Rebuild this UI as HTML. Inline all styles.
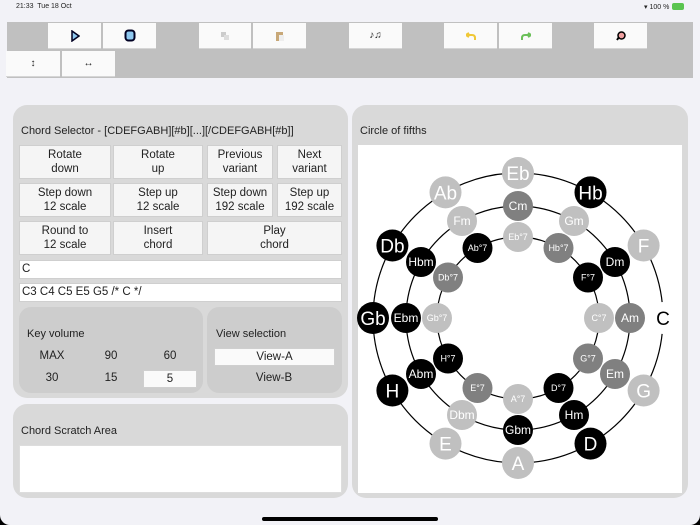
<!DOCTYPE html>
<html><head><meta charset="utf-8">
<style>
*{box-sizing:border-box;margin:0;padding:0}
html,body{width:700px;height:525px;background:#000;overflow:hidden;font-family:"Liberation Sans",sans-serif;color:#222}
#scr{position:absolute;left:0;top:0;width:700px;height:525px;background:#f2f2f7;border-radius:0 0 10px 10px}
.a{position:absolute}
.tb{left:7px;top:22px;width:686px;height:56px;background:#c0c0c0}
.bt{position:absolute;background:#fafafa;border-bottom:1px solid #d6d6d6;display:flex;align-items:center;justify-content:center}
.pn{background:#d9d9d9;border-radius:14px}
.sp{background:#cdcdcd;border-radius:12px}
.t{position:absolute;font-size:11px;color:#222}
.b{position:absolute;background:#f5f5f5;border:1px solid #cfcfcf;font-size:11.5px;line-height:14px;text-align:center;display:flex;align-items:center;justify-content:center;flex-direction:column}
.in{position:absolute;background:#fff;border:1px solid #cfcfcf;font-size:11.5px;padding-left:2px;line-height:17px}
.c{position:absolute;font-size:11.5px;text-align:center;width:40px}
</style></head><body>
<div id="scr">
<div class="a" style="left:16px;top:3px;font-size:7px">21:33&nbsp; Tue 18 Oct</div>
<div class="a" style="left:644px;top:3px;font-size:7px">&#9662; 100 %</div>
<div class="a" style="left:672px;top:3px;width:12px;height:7px;background:#5ac44f;border-radius:2px"></div>
<div class="a tb"></div>
<div class="bt" style="left:48px;top:23px;width:53px;height:26px"><svg width="10" height="12"><path d="M2 1 L9 6 L2 11 Z" fill="#8ec8f0" stroke="#002" stroke-width="1.5"/></svg></div>
<div class="bt" style="left:103px;top:23px;width:53px;height:26px"><svg width="12" height="13"><rect x="1.5" y="1.5" width="9" height="10" rx="3" fill="#8ec8f0" stroke="#002" stroke-width="2"/></svg></div>
<div class="bt" style="left:199px;top:23px;width:52px;height:26px"><svg width="8" height="8"><rect x="0" y="0" width="5" height="5" fill="#ccc"/><rect x="3" y="3" width="5" height="5" fill="#ddd"/></svg></div>
<div class="bt" style="left:253px;top:23px;width:53px;height:26px"><svg width="8" height="10"><rect x="0" y="1" width="7" height="9" fill="#c8a878"/><rect x="3" y="4" width="5" height="6" fill="#eee"/></svg></div>
<div class="bt" style="left:349px;top:23px;width:53px;height:26px;font-size:10px;font-weight:bold">&#9834;&#9835;</div>
<div class="bt" style="left:444px;top:23px;width:53px;height:26px"><svg width="10" height="8"><path d="M3 1 L0 3 L3 5 M0 3 H6 Q9 3 9 6 V8" fill="none" stroke="#f0c838" stroke-width="2"/></svg></div>
<div class="bt" style="left:499px;top:23px;width:53px;height:26px"><svg width="10" height="8"><path d="M7 1 L10 3 L7 5 M10 3 H4 Q1 3 1 6 V8" fill="none" stroke="#6cc05a" stroke-width="2"/></svg></div>
<div class="bt" style="left:594px;top:23px;width:53px;height:26px"><svg width="10" height="10"><circle cx="5.5" cy="4.5" r="3.5" fill="#f0a0a0" stroke="#000" stroke-width="1.5"/><path d="M1 9 L3 6" stroke="#000" stroke-width="2"/></svg></div>
<div class="bt" style="left:6px;top:51px;width:54px;height:26px;font-size:10px">&#8597;</div>
<div class="bt" style="left:62px;top:51px;width:53px;height:26px;font-size:10px">&#8596;</div>

<div class="a pn" style="left:13px;top:105px;width:335px;height:293px"></div>
<div class="t" style="left:21px;top:125px">Chord Selector - [CDEFGABH][#b][...][/CDEFGABH[#b]]</div>
<div class="b" style="left:19px;top:145px;width:92px;height:34px"><span>Rotate</span><span>down</span></div>
<div class="b" style="left:113px;top:145px;width:90px;height:34px"><span>Rotate</span><span>up</span></div>
<div class="b" style="left:207px;top:145px;width:66px;height:34px"><span>Previous</span><span>variant</span></div>
<div class="b" style="left:277px;top:145px;width:65px;height:34px"><span>Next</span><span>variant</span></div>
<div class="b" style="left:19px;top:183px;width:92px;height:34px"><span>Step down</span><span>12 scale</span></div>
<div class="b" style="left:113px;top:183px;width:90px;height:34px"><span>Step up</span><span>12 scale</span></div>
<div class="b" style="left:207px;top:183px;width:66px;height:34px"><span>Step down</span><span>192 scale</span></div>
<div class="b" style="left:277px;top:183px;width:65px;height:34px"><span>Step up</span><span>192 scale</span></div>
<div class="b" style="left:19px;top:221px;width:92px;height:34px"><span>Round to</span><span>12 scale</span></div>
<div class="b" style="left:113px;top:221px;width:90px;height:34px"><span>Insert</span><span>chord</span></div>
<div class="b" style="left:207px;top:221px;width:135px;height:34px"><span>Play</span><span>chord</span></div>
<div class="in" style="left:19px;top:260px;width:323px;height:19px">C</div>
<div class="in" style="left:19px;top:283px;width:323px;height:19px">C3 C4 C5 E5 G5 /* C */</div>
<div class="a sp" style="left:19px;top:307px;width:184px;height:86px"></div>
<div class="a sp" style="left:207px;top:307px;width:135px;height:86px"></div>
<div class="t" style="left:27px;top:328px">Key volume</div>
<div class="c" style="left:32px;top:350px">MAX</div>
<div class="c" style="left:91px;top:350px">90</div>
<div class="c" style="left:150px;top:350px">60</div>
<div class="c" style="left:32px;top:372px">30</div>
<div class="c" style="left:91px;top:372px">15</div>
<div class="b" style="left:143px;top:370px;width:54px;height:18px;background:#fafafa">5</div>
<div class="t" style="left:216px;top:328px">View selection</div>
<div class="b" style="left:214px;top:348px;width:121px;height:18px;background:#fafafa">View-A</div>
<div class="c" style="left:254px;top:372px">View-B</div>

<div class="a pn" style="left:13px;top:404px;width:335px;height:94px"></div>
<div class="t" style="left:21px;top:425px">Chord Scratch Area</div>
<div class="a" style="left:19px;top:445px;width:323px;height:48px;background:#fff;border:1px solid #ddd"></div>

<div class="a pn" style="left:352px;top:105px;width:336px;height:393px"></div>
<div class="t" style="left:360px;top:125px">Circle of fifths</div>
<div class="a" style="left:358px;top:145px;width:324px;height:348px;background:#fff"></div>

<svg class="a" style="left:0;top:0" width="700" height="525" font-family="Liberation Sans, sans-serif" text-anchor="middle">
<g fill="none" stroke="#000" stroke-width="1.2"><circle cx="518" cy="318" r="145"/><circle cx="518" cy="318" r="112"/><circle cx="518" cy="318" r="81"/></g>
<g font-size="19" fill="#fff">
<circle cx="663" cy="318" r="16" fill="#fff"/><text x="663" y="325" fill="#000">C</text>
<circle cx="643.6" cy="245.5" r="16" fill="#c0c0c0"/><text x="643.6" y="252.5">F</text>
<circle cx="590.5" cy="192.4" r="16" fill="#000"/><text x="590.5" y="199.4">Hb</text>
<circle cx="518" cy="173" r="16" fill="#c0c0c0"/><text x="518" y="180">Eb</text>
<circle cx="445.5" cy="192.4" r="16" fill="#c0c0c0"/><text x="445.5" y="199.4">Ab</text>
<circle cx="392.4" cy="245.5" r="16" fill="#000"/><text x="392.4" y="252.5">Db</text>
<circle cx="373" cy="318" r="16" fill="#000"/><text x="373" y="325">Gb</text>
<circle cx="392.4" cy="390.5" r="16" fill="#000"/><text x="392.4" y="397.5">H</text>
<circle cx="445.5" cy="443.6" r="16" fill="#c0c0c0"/><text x="445.5" y="450.6">E</text>
<circle cx="518" cy="463" r="16" fill="#c0c0c0"/><text x="518" y="470">A</text>
<circle cx="590.5" cy="443.6" r="16" fill="#000"/><text x="590.5" y="450.6">D</text>
<circle cx="643.6" cy="390.5" r="16" fill="#c0c0c0"/><text x="643.6" y="397.5">G</text>
</g>
<g font-size="12" fill="#fff">
<circle cx="630" cy="318" r="15" fill="#808080"/><text x="630" y="322">Am</text>
<circle cx="615" cy="262" r="15" fill="#000"/><text x="615" y="266">Dm</text>
<circle cx="574" cy="221" r="15" fill="#c0c0c0"/><text x="574" y="225">Gm</text>
<circle cx="518" cy="206" r="15" fill="#808080"/><text x="518" y="210">Cm</text>
<circle cx="462" cy="221" r="15" fill="#c0c0c0"/><text x="462" y="225">Fm</text>
<circle cx="421" cy="262" r="15" fill="#000"/><text x="421" y="266">Hbm</text>
<circle cx="406" cy="318" r="15" fill="#000"/><text x="406" y="322">Ebm</text>
<circle cx="421" cy="374" r="15" fill="#000"/><text x="421" y="378">Abm</text>
<circle cx="462" cy="415" r="15" fill="#c0c0c0"/><text x="462" y="419">Dbm</text>
<circle cx="518" cy="430" r="15" fill="#000"/><text x="518" y="434">Gbm</text>
<circle cx="574" cy="415" r="15" fill="#000"/><text x="574" y="419">Hm</text>
<circle cx="615" cy="374" r="15" fill="#808080"/><text x="615" y="378">Em</text>
</g>
<g font-size="9" fill="#fff">
<circle cx="599" cy="318" r="15" fill="#c0c0c0"/><text x="599" y="321">C°7</text>
<circle cx="588" cy="277.5" r="15" fill="#000"/><text x="588" y="280.5">F°7</text>
<circle cx="558.5" cy="248" r="15" fill="#808080"/><text x="558.5" y="251">Hb°7</text>
<circle cx="518" cy="237" r="15" fill="#c0c0c0"/><text x="518" y="240">Eb°7</text>
<circle cx="477.5" cy="248" r="15" fill="#000"/><text x="477.5" y="251">Ab°7</text>
<circle cx="448" cy="277.5" r="15" fill="#808080"/><text x="448" y="280.5">Db°7</text>
<circle cx="437" cy="318" r="15" fill="#c0c0c0"/><text x="437" y="321">Gb°7</text>
<circle cx="448" cy="358.5" r="15" fill="#000"/><text x="448" y="361.5">H°7</text>
<circle cx="477.5" cy="388" r="15" fill="#808080"/><text x="477.5" y="391">E°7</text>
<circle cx="518" cy="399" r="15" fill="#c0c0c0"/><text x="518" y="402">A°7</text>
<circle cx="558.5" cy="388" r="15" fill="#000"/><text x="558.5" y="391">D°7</text>
<circle cx="588" cy="358.5" r="15" fill="#808080"/><text x="588" y="361.5">G°7</text>
</g>
</svg>
<div class="a" style="left:262px;top:517px;width:176px;height:4px;background:#000;border-radius:2px"></div>
</div>
</body></html>
